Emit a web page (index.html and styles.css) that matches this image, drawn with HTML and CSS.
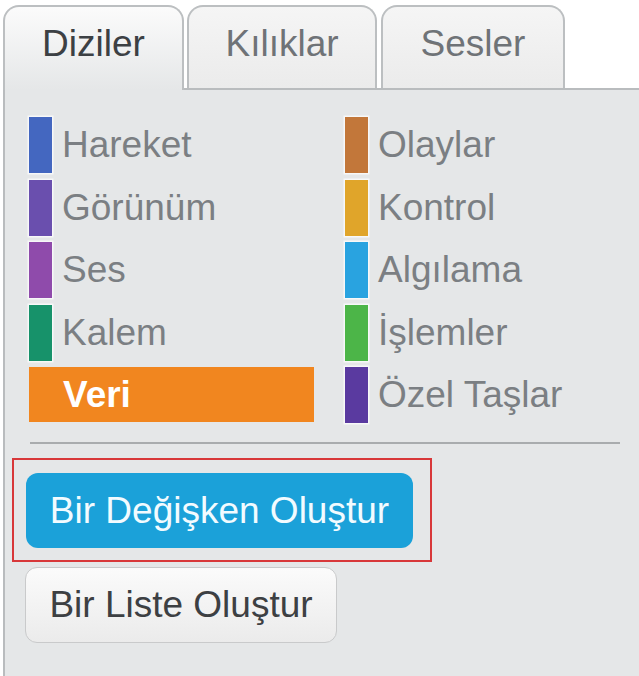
FILE: index.html
```html
<!DOCTYPE html>
<html lang="tr">
<head>
<meta charset="utf-8">
<title>Diziler</title>
<link rel="stylesheet" href="styles.css">
</head>
<body>
<div class="tabs">
  <div class="tab tab-1 active">Diziler</div>
  <div class="tab tab-2">Kılıklar</div>
  <div class="tab tab-3">Sesler</div>
</div>
<div class="panel">
  <div class="cats">
    <div class="cat"><span class="bar c-hareket"></span>Hareket</div>
    <div class="cat"><span class="bar c-gorunum"></span>Görünüm</div>
    <div class="cat"><span class="bar c-ses"></span>Ses</div>
    <div class="cat"><span class="bar c-kalem"></span>Kalem</div>
    <div class="cat sel">Veri</div>
    <div class="cat"><span class="bar c-olaylar"></span>Olaylar</div>
    <div class="cat"><span class="bar c-kontrol"></span>Kontrol</div>
    <div class="cat"><span class="bar c-algilama"></span>Algılama</div>
    <div class="cat"><span class="bar c-islemler"></span>İşlemler</div>
    <div class="cat"><span class="bar c-ozel"></span>Özel Taşlar</div>
  </div>
  <div class="divider"></div>
  <div class="highlight">
    <button class="btn btn-blue">Bir Değişken Oluştur</button>
  </div>
  <button class="btn btn-white">Bir Liste Oluştur</button>
</div>
</body>
</html>
```
FILE: styles.css
```css
html, body {
  margin: 0;
  padding: 0;
}
body {
  background: #ffffff;
  font-family: "Liberation Sans", Arial, sans-serif;
  min-height: 100vh;
  display: flex;
  flex-direction: column;
}
.tabs {
  display: flex;
  align-items: flex-end;
  height: 90px;
  box-sizing: border-box;
  padding-top: 5px;
  margin-left: 3px;
  border-bottom: 2px solid #b9bcbe;
}
.tab {
  box-sizing: border-box;
  height: 83px;
  border: 2px solid #bcbfc1;
  border-bottom: none;
  border-radius: 16px 16px 0 0;
  background: linear-gradient(#f5f5f5, #ebebeb);
  font-size: 37px;
  line-height: 37px;
  padding-top: 18px;
  color: #6f7377;
  text-align: center;
}
.tab-1 { width: 181px; }
.tab-2 { width: 190px; margin-left: 3px; }
.tab-3 { width: 184px; margin-left: 4px; }
.tab.active {
  height: 85px;
  margin-bottom: -2px;
  background: linear-gradient(#fbfbfb, #e5e7e8);
  color: #3c4044;
  position: relative;
}
.panel {
  flex: 1;
  background: #e5e7e8;
  margin-left: 3px;
  border-left: 2px solid #b9bcbe;
  padding: 27px 19px 0 20px;
}
.cats {
  display: grid;
  grid-template-columns: 285px 1fr;
  grid-template-rows: repeat(5, 56px);
  grid-auto-flow: column;
  column-gap: 31px;
  row-gap: 6.5px;
  margin-left: 4px;
}
.cat {
  display: flex;
  align-items: center;
  gap: 10px;
  font-size: 37px;
  color: #7b7f83;
}
.bar {
  width: 23px;
  height: 56px;
  flex: none;
  box-shadow: 0 0 0 1.5px #f7f8f8;
}
.c-hareket { background: #4467c0; }
.c-gorunum { background: #6a4fae; }
.c-ses { background: #8f4bab; }
.c-kalem { background: #17926a; }
.c-olaylar { background: #c2773a; }
.c-kontrol { background: #e0a52a; }
.c-algilama { background: #29a3e0; }
.c-islemler { background: #4cb548; }
.c-ozel { background: #5a3aa0; }
.cat.sel {
  background: #f1861f;
  color: #ffffff;
  font-weight: bold;
  padding-left: 34px;
  height: 55px;
}
.divider {
  height: 2px;
  background: #a9acae;
  margin: 19px 0 0 5px;
}
.highlight {
  box-sizing: border-box;
  width: 420px;
  margin: 14px 0 0 -13px;
  border: 2px solid #d8383a;
  padding: 13px 17px 12px 12px;
}
.btn {
  display: block;
  box-sizing: border-box;
  font-family: "Liberation Sans", Arial, sans-serif;
  font-size: 37px;
  border-radius: 12px;
  text-align: center;
  padding: 0;
}
.btn-blue {
  width: 387px;
  height: 75px;
  border: none;
  background: #1ba1d9;
  color: #f2fbff;
}
.btn-white {
  width: 312px;
  height: 76px;
  margin-top: 5px;
  border: 1.5px solid #c9cacb;
  background: linear-gradient(#fbfbfb, #ebebeb);
  color: #3d4043;
}
```
